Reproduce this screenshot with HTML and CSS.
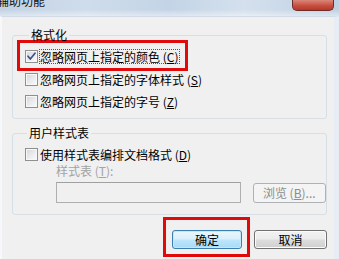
FILE: index.html
```html
<!DOCTYPE html>
<html lang="zh-CN">
<head>
<meta charset="utf-8">
<title>辅助功能</title>
<link rel="stylesheet" href="styles.css">
</head>
<body>
<div class="window">
  <div class="titlebar">
    <span class="title">辅助功能</span>
    <span class="close"></span>
  </div>
  <div class="client">
    <fieldset class="group g1">
      <legend>格式化</legend>
      <div class="mark mark-row">
        <label class="check">
          <span class="box"><svg width="11" height="11" viewBox="0 0 11 11"><path d="M2 5.2 L4.3 8 L9 2.2" fill="none" stroke="#3f4f8c" stroke-width="1.7" stroke-linecap="round" stroke-linejoin="round"/></svg></span>
          <span class="text focus">忽略网页上指定的颜色 (<u>C</u>)</span>
        </label>
      </div>
      <label class="check row2">
        <span class="box"></span>
        <span class="text">忽略网页上指定的字体样式 (<u>S</u>)</span>
      </label>
      <label class="check row3">
        <span class="box"></span>
        <span class="text">忽略网页上指定的字号 (<u>Z</u>)</span>
      </label>
    </fieldset>
    <fieldset class="group g2">
      <legend>用户样式表</legend>
      <label class="check row-first">
        <span class="box"></span>
        <span class="text">使用样式表编排文档格式 (<u>D</u>)</span>
      </label>
      <div class="field-label">样式表 (<u>T</u>):</div>
      <div class="field-row">
        <span class="input"></span>
        <span class="btn disabled browse">浏览 (<u>B</u>)...</span>
      </div>
    </fieldset>
    <div class="actions">
      <div class="mark mark-btn">
        <span class="btn default ok">确定</span>
      </div>
      <span class="btn cancel">取消</span>
    </div>
  </div>
</div>
</body>
</html>
```
FILE: styles.css
```css
* { box-sizing: border-box; }

body {
  margin: 0;
  background: #f0f0f0;
  font-family: "Noto Sans CJK SC", "Noto Sans", sans-serif;
  font-size: 12px;
  color: #000;
}

.window {
  width: 339px;
  height: 259px;
  overflow: hidden;
  display: flex;
  flex-direction: column;
}

.titlebar {
  flex: none;
  height: 16px;
  display: flex;
  justify-content: space-between;
  align-items: flex-start;
  overflow: hidden;
  background:
    linear-gradient(180deg, rgba(255,255,255,0) 60%, rgba(255,255,255,0.45) 100%),
    linear-gradient(90deg, #c2d2e4 0%, #cfdceb 25%, #c4d4e6 50%, #d4e0ed 72%, #bfd0e3 100%);
}

.title {
  margin-top: -6px;
  margin-left: -3px;
  font-size: 12px;
  line-height: 14px;
  color: #111;
}

.close {
  width: 42px;
  height: 11px;
  margin-right: 5px;
  background: linear-gradient(180deg, #d9877a 0%, #c8503f 55%, #b5382a 100%);
  border: 1px solid #6e2c24;
  border-top: none;
  border-radius: 0 0 5px 5px;
}

.client {
  flex: 1;
  display: flex;
  flex-direction: column;
  background: #f0f0f0;
  border-top: 1px solid #d3dce6;
  border-left: 2px solid #f6f8fb;
  border-right: 5px solid #e6edf5;
  padding: 11px 7px 0 10px;
}

.group {
  margin: 0;
  min-width: 0;
  border: 1px solid #d5dfe5;
  border-radius: 3px;
  padding: 0 0 9px 12px;
}

.group legend {
  padding: 0 2px;
  margin-left: 4px;
  line-height: 14px;
  font-size: 12px;
}

.g2 {
  margin-top: 7px;
  padding-bottom: 11px;
}

.g2 legend {
  margin-left: 2px;
}

.check {
  display: flex;
  align-items: center;
  height: 15px;
  line-height: 15px;
  white-space: nowrap;
}

.box {
  flex: none;
  width: 13px;
  height: 13px;
  margin-right: 2px;
  border: 1px solid #8e8f8f;
  background: linear-gradient(135deg, #d2d5d9 0%, #ebecee 55%, #fbfbfb 100%);
  box-shadow: inset 0 0 0 1px #f7f7f7;
  display: flex;
  align-items: center;
  justify-content: center;
}

.text u {
  text-decoration: underline;
}

.focus {
  margin-left: -1px;
  border: 1px dotted #555;
  line-height: 13px;
  padding: 0 1px 0 0;
}

.mark {
  border: 3px solid #e10a0a;
}

.mark-row {
  width: fit-content;
  margin: -2px 0 0 -8px;
  padding: 6px 5px 4px 5px;
}

.row2 { margin-top: 1px; }
.row3 { margin-top: 7px; }

.row-first { margin-top: 7px; }

.field-label {
  margin: 1px 0 0 31px;
  line-height: 15px;
  color: #a3a3a3;
}

.field-row {
  display: flex;
  align-items: flex-start;
  margin: 4px 0 0 31px;
}

.input {
  width: 186px;
  height: 21px;
  border: 1px solid #afafaf;
  border-top-color: #a0a0a0;
  background: #f0f0f0;
}

.btn {
  display: flex;
  align-items: center;
  justify-content: center;
  border: 1px solid #707070;
  border-radius: 3px;
  background: linear-gradient(180deg, #f2f2f2 0%, #ebebeb 48%, #dddddd 52%, #cfcfcf 100%);
  box-shadow: inset 0 0 0 1px #fbfbfb;
  line-height: 1;
  font-size: 12px;
}

.browse {
  margin: 1px 0 0 12px;
  width: 74px;
  height: 20px;
}

.btn.disabled {
  border-color: #adb2b5;
  background: #f4f4f4;
  box-shadow: none;
  color: #8d8d8d;
}

.actions {
  display: flex;
  justify-content: flex-end;
  align-items: flex-start;
  margin-top: 2px;
}

.mark-btn {
  padding: 10px 5px 5px 6px;
}

.ok {
  width: 70px;
  height: 19px;
}

.btn.default {
  border-color: #3c7fb1;
  background: linear-gradient(180deg, #eaf6fd 0%, #d9f0fc 48%, #bee6fd 52%, #a7d9f5 100%);
  box-shadow: inset 0 0 0 1px #c4e8fb;
}

.cancel {
  width: 73px;
  height: 19px;
  margin: 13px 0 0 4px;
}
```
